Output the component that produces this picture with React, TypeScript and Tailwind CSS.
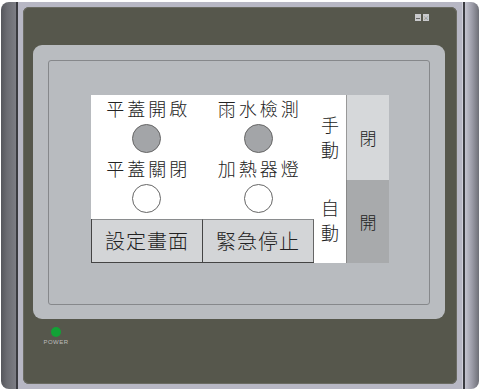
const cjk = "font-['Noto_Sans_CJK_TC','Noto_Sans_CJK_SC',sans-serif] font-light";

function Lamp({ on }: { on: boolean }) {
  return (
    <div
      className={
        'w-[29px] h-[29px] rounded-full border border-[#666] ' +
        (on ? 'bg-[#a3a5a8]' : 'bg-white')
      }
    />
  );
}

function Indicator({ label, on }: { label: string; on: boolean }) {
  return (
    <div className="flex flex-col items-center">
      <div className="text-[18px] leading-[22px] tracking-[3px] pl-[3px] text-[#222] mb-[5px]">{label}</div>
      <Lamp on={on} />
    </div>
  );
}

export default function App() {
  return (
    <div className={'w-[480px] h-[391px] bg-white px-[1px] py-[2px] ' + cjk}>
      <div className="h-full flex rounded-[8px] overflow-hidden">
        {/* left bezel edge */}
        <div className="w-[15px] bg-[linear-gradient(to_right,#55565c,#6b6c72_40%,#7c7d84)]" />
        <div className="w-[2px] bg-[#3a3b40]" />
        {/* silver band */}
        <div className="flex-1 bg-[#b7b7c4] px-[5px] pt-[5px] pb-[5px] flex">
          <div className="flex-1 rounded-[6px] bg-[#56574c] shadow-[inset_0_0_0_1px_#6a6b62] flex flex-col">
            {/* window buttons */}
            <div className="h-[38px] flex justify-end items-start pt-[7px] pr-[28px] gap-[2px]">
              <div className="w-[6px] h-[7px] bg-[#c9cacc] flex items-end justify-center pb-[2px]">
                <div className="w-[4px] h-px bg-[#666]" />
              </div>
              <div className="w-[6px] h-[7px] bg-[#c9cacc] flex items-center justify-center text-[6px] leading-none text-[#555]">×</div>
            </div>
            {/* screen bezel */}
            <div className="ml-[10px] mr-[12px] h-[274px] rounded-[9px] bg-[#b9bcc0] p-[15px] pb-[14px] flex">
              <div className="flex-1 rounded-[3px] border border-[#86888b] bg-[#b8bbbf] pl-[42px] pt-[34px]">
                <div className="flex w-[298px] h-[168px]">
                  {/* white panel */}
                  <div className="w-[223px] bg-white flex flex-col">
                    <div className="flex-1 grid grid-cols-2 pt-[2px]">
                      <div className="flex flex-col items-center gap-[4px]">
                        <Indicator label="平蓋開啟" on={true} />
                        <Indicator label="平蓋關閉" on={false} />
                      </div>
                      <div className="flex flex-col items-center gap-[4px]">
                        <Indicator label="雨水檢測" on={true} />
                        <Indicator label="加熱器燈" on={false} />
                      </div>
                    </div>
                    <div className="h-[44px] grid grid-cols-2 border-l border-b border-[#444]">
                      <div className="bg-[#d3d5d7] border-t border-t-[#8a8c8e] border-r border-r-[#444] flex items-center justify-center text-[20px] tracking-[1px] text-[#222]">設定畫面</div>
                      <div className="bg-[#d3d5d7] border-t border-t-[#8a8c8e] border-r border-r-[#666] flex items-center justify-center text-[20px] tracking-[1px] text-[#222]">緊急停止</div>
                    </div>
                  </div>
                  {/* mode labels */}
                  <div className="w-[32px] bg-white flex flex-col items-center text-[18px] leading-[25px] text-[#222]">
                    <div className="pt-[17px]">手</div>
                    <div>動</div>
                    <div className="mt-[33px]">自</div>
                    <div>動</div>
                  </div>
                  {/* switch buttons */}
                  <div className="w-[43px] flex flex-col">
                    <div className="h-[85px] bg-[#d6d8da] border-l border-[#999] flex items-center justify-center text-[17px] text-[#222]">閉</div>
                    <div className="flex-1 bg-[#a8aaac] border-l border-[#888] flex items-center justify-center text-[17px] text-[#222]">開</div>
                  </div>
                </div>
              </div>
            </div>
            {/* power led */}
            <div className="flex flex-col items-start pl-[22px] pt-[8px]">
              <div className="w-[22px] flex flex-col items-center">
                <div className="w-[10px] h-[10px] rounded-full bg-[#12a236]" />
                <div className="mt-[1px] font-['Liberation_Sans',sans-serif] text-[6px] leading-[8px] tracking-[0.5px] text-[#bdbdbd]">POWER</div>
              </div>
            </div>
          </div>
        </div>
        <div className="w-[1px] bg-[#d0d0da]" />
        <div className="w-[2px] bg-[#3a3b40]" />
        {/* right bezel edge */}
        <div className="w-[14px] bg-[linear-gradient(to_right,#c4c4cf,#9c9ca8_50%,#6e6f77)]" />
      </div>
    </div>
  );
}
